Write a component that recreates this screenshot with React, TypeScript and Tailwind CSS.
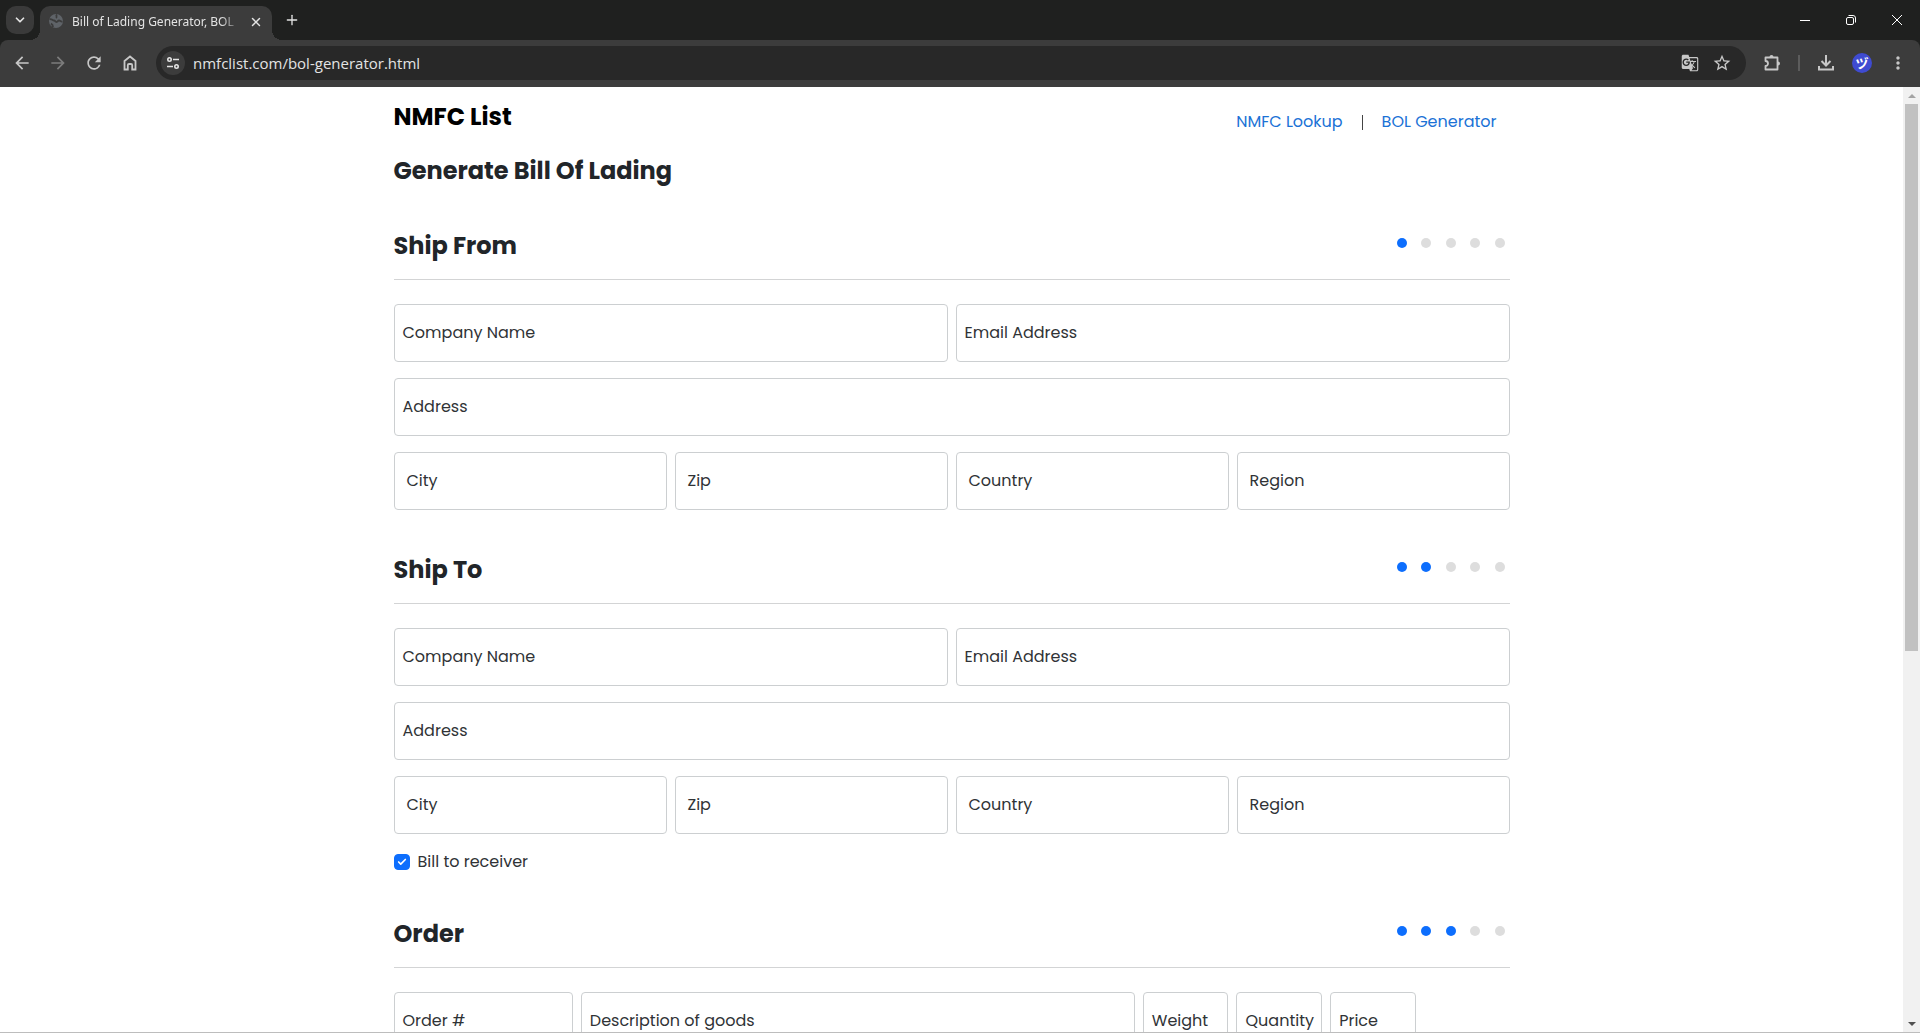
import React, { useState } from 'react';
import { Check, ChevronDown, Plus, X } from 'lucide-react';
import { MdArrowBack, MdArrowForward, MdStarBorder, MdGTranslate, MdMoreVert, MdRefresh } from 'react-icons/md';

type FieldProps = {
  id: string;
  label: string;
  className?: string;
  inset?: boolean;
};

const Field: React.FC<FieldProps> = ({ id, label, className = '', inset = false }) => {
  const [value, setValue] = useState('');

  return (
    <div className={`relative ${className}`}>
      <input
        id={id}
        type="text"
        value={value}
        onChange={(e) => setValue(e.target.value)}
        className="block w-full h-[58px] px-2 rounded-[4px] border border-[#cccfd1] bg-white focus:outline-none focus:border-[#86b7fe]"
      />
      {!value && (
        <label
          htmlFor={id}
          className={`absolute inset-y-0 left-0 flex items-center whitespace-nowrap pointer-events-none ${inset ? 'pl-[13px]' : 'pl-[9px]'}`}
        >
          {label}
        </label>
      )}
    </div>
  );
};

const SectionHeader: React.FC<{ title: string; step: number }> = ({ title, step }) => (
  <div className="flex items-center justify-between border-b border-[#d3d4d5] pb-[13px] mb-6">
    <h2 className="text-2xl leading-10 font-bold text-[#212529]">{title}</h2>
    <div className="flex justify-between w-[108px] mr-[5px] pb-[6px]">
      {[1, 2, 3, 4, 5].map((n) => (
        <span key={n} className={`size-[10px] rounded-full ${n <= step ? 'bg-[#0d6efd]' : 'bg-[#dddddd]'}`} />
      ))}
    </div>
  </div>
);

const AddressFields: React.FC<{ prefix: string }> = ({ prefix }) => (
  <div className="grid grid-cols-4 gap-x-2 gap-y-4">
    <Field id={`${prefix}-company`} label="Company Name" className="col-span-2" />
    <Field id={`${prefix}-email`} label="Email Address" className="col-span-2" />
    <Field id={`${prefix}-address`} label="Address" className="col-span-4" />
    <Field id={`${prefix}-city`} label="City" inset />
    <Field id={`${prefix}-zip`} label="Zip" inset />
    <Field id={`${prefix}-country`} label="Country" inset />
    <Field id={`${prefix}-region`} label="Region" inset />
  </div>
);

const TabStrip: React.FC = () => (
  <div className="flex items-end h-10 bg-[#1f201f] pl-[6px]">
    <button aria-label="Search tabs" className="size-7 mb-[6px] rounded-[10px] bg-[#3a3a3a] flex items-center justify-center">
      <ChevronDown className="w-3.5 h-3.5" strokeWidth={3} />
    </button>
    <div className="relative ml-[6px] flex items-center h-[34px] w-[232px] pl-2 pr-[9px] rounded-t-[10px] bg-[#3c3c3c]">
      <span className="absolute bottom-0 -left-[10px] size-[10px] bg-[radial-gradient(circle_at_0_0,transparent_10px,#3c3c3c_10px)]" />
      <span className="absolute bottom-0 -right-[10px] size-[10px] bg-[radial-gradient(circle_at_100%_0,transparent_10px,#3c3c3c_10px)]" />
      <svg viewBox="0 0 16 16" className="w-4 h-4 mb-1 shrink-0">
        <circle cx="8" cy="8" r="7" fill="#5f6368" />
        <path d="M1.500 6.500C3 5 4.500 7.500 6 7.500s1 1.500 2.500 1.500 1-1.500 2.500-1.500 1.500 1.500 3.500 1M8 1.500C9.500 3 7.500 4 9 5M5 14c0-2-.5-2.500-2-3.500" fill="none" stroke="#3c3c3c" strokeWidth="1.800" />
      </svg>
      <span className="ml-2 mb-[2px] flex-1 overflow-hidden whitespace-nowrap text-xs leading-5 text-[#e3e3e3] [mask-image:linear-gradient(to_right,black_88%,transparent)]">
        Bill of Lading Generator, BOL
      </span>
      <button aria-label="Close tab" className="ml-2 mb-[2px] shrink-0">
        <X className="w-3.5 h-3.5" strokeWidth={2.5} />
      </button>
    </div>
    <button aria-label="New tab" className="ml-3 mb-3">
      <Plus className="w-4 h-4" strokeWidth={2} />
    </button>
    <div className="ml-auto flex items-center h-10 pr-[18px] gap-9 text-white">
      <button aria-label="Minimize">
        <svg viewBox="0 0 10 10" className="w-2.5 h-2.5"><path d="M0 5.500h10" stroke="currentColor" /></svg>
      </button>
      <button aria-label="Restore">
        <svg viewBox="0 0 10 10" className="w-2.5 h-2.5" fill="none" stroke="currentColor">
          <rect x=".5" y="2.500" width="7" height="7" rx="1.500" />
          <path d="M2.500.5H7A2.500 2.500 0 0 1 9.500 3v4.500" />
        </svg>
      </button>
      <button aria-label="Close">
        <svg viewBox="0 0 10 10" className="w-2.5 h-2.5"><path d="M0 0l10 10M10 0L0 10" stroke="currentColor" /></svg>
      </button>
    </div>
  </div>
);

const Toolbar: React.FC = () => (
  <div className="flex items-center h-[47px] px-3 pt-[2px] pb-[3px] bg-[#3c3c3c] rounded-t-[8px] text-[#c7c7c7]">
    <button aria-label="Back"><MdArrowBack className="w-5 h-5" /></button>
    <button aria-label="Forward" className="ml-4 text-[#7c7c7c]"><MdArrowForward className="w-5 h-5" /></button>
    <button aria-label="Reload" className="ml-4"><MdRefresh className="w-5 h-5" /></button>
    <button aria-label="Home" className="ml-4">
      <svg viewBox="0 0 20 20" className="w-5 h-5" fill="none" stroke="currentColor" strokeWidth="1.800">
        <path d="M4.500 8L10 3.500 15.500 8v8.500h-3.300v-4.300a1.200 1.200 0 0 0-1.200-1.200H9a1.200 1.200 0 0 0-1.200 1.200v4.300H4.500z" />
      </svg>
    </button>
    <div className="ml-4 flex-1 flex items-center h-[34px] rounded-full bg-[#282828] pl-[5px] pr-[14px]">
      <button aria-label="Site information" className="size-6 rounded-full bg-[#3c3c3c] flex items-center justify-center">
        <svg viewBox="0 0 14 14" className="w-3.5 h-3.5" fill="none" stroke="#e3e3e3" strokeWidth="1.600">
          <circle cx="3.500" cy="3.500" r="1.700" />
          <path d="M7 3.500h6M1 10.500h6" />
          <circle cx="10.500" cy="10.500" r="1.700" />
        </svg>
      </button>
      <input
        aria-label="Address bar"
        defaultValue="nmfclist.com/bol-generator.html"
        className="ml-2 flex-1 bg-transparent text-[15px] leading-5 text-[#e3e3e3] font-['Open_Sans',sans-serif] focus:outline-none"
      />
      <button aria-label="Translate this page"><MdGTranslate className="w-[18px] h-[18px]" /></button>
      <button aria-label="Bookmark this page" className="ml-[13px]"><MdStarBorder className="w-5 h-5" /></button>
    </div>
    <button aria-label="Extensions" className="ml-4">
      <svg viewBox="0 0 20 20" className="w-5 h-5" fill="none" stroke="currentColor" strokeWidth="1.800" strokeLinejoin="round">
        <path d="M3.500 4.500H15.500V16.500H3.500V13a2.300 2.300 0 0 0 0-5z" />
        <path d="M7.500 4a2 2 0 0 1 4 0zM16 8.500a2 2 0 0 1 0 4z" fill="currentColor" stroke="none" />
      </svg>
    </button>
    <span className="ml-4 w-[2px] h-4 bg-[#5c5c5c]" />
    <button aria-label="Downloads" className="ml-4">
      <svg viewBox="0 0 20 20" className="w-5 h-5" fill="none" stroke="currentColor" strokeWidth="2">
        <path d="M10 2v10M5.500 8L10 12.500 14.500 8M3 13v3.500h14V13" />
      </svg>
    </button>
    <button aria-label="Profile" className="ml-4 size-5 rounded-full bg-[#3f4bd1] text-white text-[13px] leading-5 font-bold font-['Noto_Sans_CJK_JP',sans-serif]">
      ヅ
    </button>
    <button aria-label="Menu" className="ml-4"><MdMoreVert className="w-5 h-5" /></button>
  </div>
);

const Scrollbar: React.FC = () => (
  <div className="w-[17px] shrink-0 flex flex-col items-center bg-[#f1f1f1]">
    <span className="h-[17px] flex items-center">
      <svg viewBox="0 0 8 4" className="w-2 h-1"><path d="M0 4l4-4 4 4z" fill="#a3a3a3" /></svg>
    </span>
    <span className="w-[13px] grow-[3] bg-[#c1c1c1]" />
    <span className="grow-2" />
    <span className="h-[17px] flex items-center">
      <svg viewBox="0 0 8 4" className="w-2 h-1"><path d="M0 0l4 4 4-4z" fill="#505050" /></svg>
    </span>
  </div>
);

const App: React.FC = () => {
  const [billReceiver, setBillReceiver] = useState(true);

  return (
    <div className="h-screen flex flex-col overflow-hidden bg-white">
      <header className="shrink-0 bg-[#1f201f] text-[#e3e3e3] font-['Noto_Sans',sans-serif]">
        <TabStrip />
        <Toolbar />
      </header>

      <div className="flex-1 min-h-0 flex border-b border-[#bdbdbd]">
        <main className="flex-1 overflow-hidden text-[#303336] font-['Poppins','Inter',sans-serif]">
          <div className="max-w-[1140px] mx-auto px-3 text-base leading-6">
            <div className="flex items-center justify-between pt-2 h-[64px]">
              <a href="#" className="text-2xl leading-10 font-bold text-black pb-3">NMFC List</a>
              <nav className="flex items-center gap-[19px] pr-[13px] pb-[2px]">
                <a href="#" className="text-[#1b72d6]">NMFC Lookup</a>
                <span className="w-px h-[15px] bg-[#444444]" />
                <a href="#" className="text-[#1b72d6]">BOL Generator</a>
              </nav>
            </div>
            <h1 className="text-2xl leading-10 font-bold text-[#212529]">Generate Bill Of Lading</h1>

            <form>
              <section className="mt-[35px]">
                <SectionHeader title="Ship From" step={1} />
                <AddressFields prefix="from" />
              </section>

              <section className="mt-10">
                <SectionHeader title="Ship To" step={2} />
                <AddressFields prefix="to" />
                <label className="mt-4 flex items-center gap-2 w-fit">
                  <span className="relative size-4">
                    <input
                      type="checkbox"
                      checked={billReceiver}
                      onChange={(e) => setBillReceiver(e.target.checked)}
                      className="block size-4 appearance-none rounded-[4px] border border-[#bfbfbf] checked:border-[#0d6efd] checked:bg-[#0d6efd]"
                    />
                    {billReceiver && <Check className="absolute inset-[3px] w-2.5 h-2.5 text-white pointer-events-none" strokeWidth={4} />}
                  </span>
                  Bill to receiver
                </label>
              </section>

              <section className="mt-10">
                <SectionHeader title="Order" step={3} />
                <div className="grid grid-cols-12 gap-2">
                  <Field id="order-number" label="Order #" className="col-span-2" />
                  <Field id="order-description" label="Description of goods" className="col-span-6" />
                  <Field id="order-weight" label="Weight" />
                  <Field id="order-quantity" label="Quantity" />
                  <Field id="order-price" label="Price" />
                </div>
              </section>
            </form>
          </div>
        </main>
        <Scrollbar />
      </div>
    </div>
  );
};

export default App;
